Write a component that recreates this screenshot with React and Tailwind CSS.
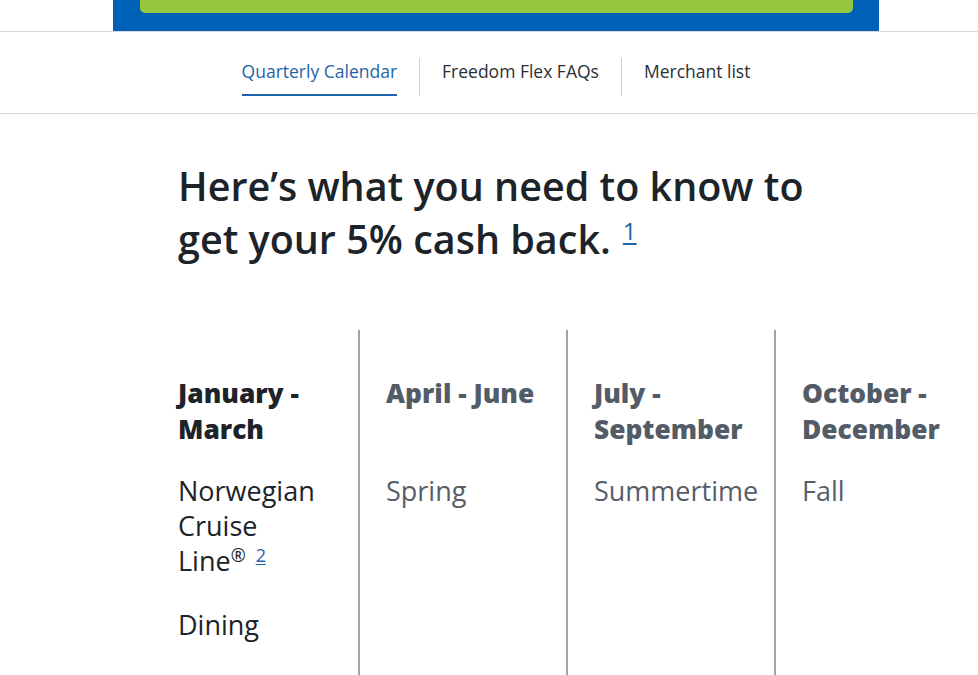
import React from 'react';

const quarters = [
  { title: ['January -', 'March'], active: true },
  { title: ['April - June'], items: ['Spring'] },
  { title: ['July -', 'September'], items: ['Summertime'] },
  { title: ['October -', 'December'], items: ['Fall'] },
];

function App() {
  return (
    <div className="h-[675px] overflow-hidden bg-white font-['Open_Sans',sans-serif] text-[#1c2329]">
      {/* banner */}
      <div className="border-b border-[#d9d9d9]">
        <div className="ml-[113px] h-[31px] w-[766px] bg-[#0061b8] pl-[27px] pr-[26px]">
          <div className="h-[13px] rounded-b-[5px] bg-[#95c83d]" />
        </div>
      </div>

      {/* tabs */}
      <nav className="flex h-[82px] items-start justify-center border-b border-[#d6d6d6] pl-[14px] pt-[26px]">
        <a href="#" className="border-b-2 border-[#1f63a8] pb-[10px] text-[17.5px] leading-[26px] text-[#1f63a8]">
          Quarterly Calendar
        </a>
        <span className="mx-[22px] h-[38px] w-px bg-[#d0d0d0]" />
        <a href="#" className="border-b-2 border-transparent pb-[10px] text-[17.5px] leading-[26px] text-[#2a2f35]">
          Freedom Flex FAQs
        </a>
        <span className="mx-[22px] h-[38px] w-px bg-[#d0d0d0]" />
        <a href="#" className="border-b-2 border-transparent pb-[10px] text-[17.5px] leading-[26px] text-[#2a2f35]">
          Merchant list
        </a>
      </nav>

      <main className="pl-[178px]">
        <h2 className="mt-[46px] text-[39.5px] font-semibold leading-[53px]">
          Here’s what you need to know to<br />
          get your 5% cash back.
          <a href="#" className="relative top-[-14px] ml-[12px] text-[24px] font-normal leading-none text-[#1f63a8] underline underline-offset-[3px]">
            1
          </a>
        </h2>

        <div className="mt-[64px] grid grid-cols-[180px_208px_208px_208px]">
          {quarters.map((q, i) => (
            <div
              key={i}
              className={
                'h-[400px] pt-[45px] ' +
                (i === 0 ? '' : 'border-l-2 border-[#a3a3a3] pl-[26px]')
              }
            >
              <h3
                className={
                  'h-[72px] text-[26.3px] font-extrabold leading-[36px] ' +
                  (q.active ? 'text-[#1c2329]' : 'text-[#535c66]')
                }
              >
                {q.title.map((t, j) => (
                  <div key={j}>{t}</div>
                ))}
              </h3>
              {q.active ? (
                <div className="mt-[26px] text-[27px] leading-[35px]">
                  <p className="w-[150px]">
                    Norwegian Cruise Line
                    <span className="relative top-[-9px] text-[18px] leading-none">®</span>
                    <a href="#" className="relative top-[-9px] ml-[10px] text-[18px] leading-none text-[#1f63a8] underline underline-offset-2">
                      2
                    </a>
                  </p>
                  <p className="mt-[29px]">Dining</p>
                </div>
              ) : (
                <div className="mt-[26px] text-[27px] leading-[35px] text-[#555e69]">
                  {q.items.map((t) => (
                    <p key={t}>{t}</p>
                  ))}
                </div>
              )}
            </div>
          ))}
        </div>
      </main>
    </div>
  );
}

export default App;
